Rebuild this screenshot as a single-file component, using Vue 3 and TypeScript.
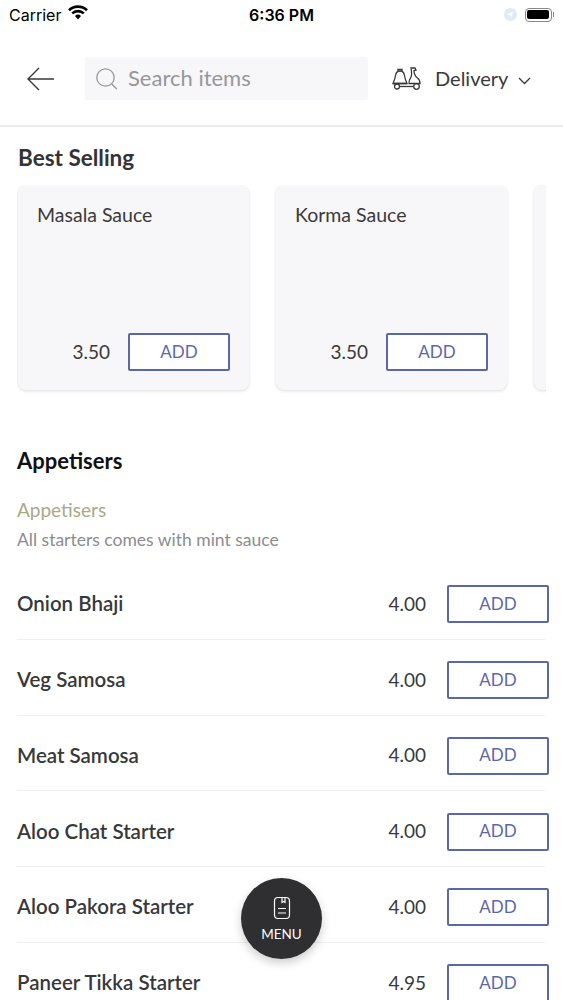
<script setup lang="ts">
const best = [
  { name: 'Masala Sauce', price: '3.50' },
  { name: 'Korma Sauce', price: '3.50' },
]
const items = [
  { name: 'Onion Bhaji', price: '4.00' },
  { name: 'Veg Samosa', price: '4.00' },
  { name: 'Meat Samosa', price: '4.00' },
  { name: 'Aloo Chat Starter', price: '4.00' },
  { name: 'Aloo Pakora Starter', price: '4.00' },
  { name: 'Paneer Tikka Starter', price: '4.95' },
]
</script>

<template>
  <div class="page">
    <div class="status">
      <div class="status-left">
        <span>Carrier</span>
        <svg class="wifi" width="20" height="15" viewBox="0 0 20 15">
          <path d="M1 5.2a13 13 0 0 1 18 0" fill="none" stroke="#000" stroke-width="2.6" />
          <path d="M4.2 8.4a8.5 8.5 0 0 1 11.6 0" fill="none" stroke="#000" stroke-width="2.6" />
          <path d="M7 11a4.4 4.4 0 0 1 6 0l-3 3.500z" fill="#000" />
        </svg>
      </div>
      <div class="status-time">6:36 PM</div>
      <div class="status-right">
        <svg width="13" height="13" viewBox="0 0 13 13">
          <circle cx="6.5" cy="6.5" r="6.5" fill="#dfe9f8" />
          <path d="M3 6.6 9.6 3.4 7 10 6.2 7.2z" fill="#fff" />
        </svg>
        <div class="battery"><div class="battery-fill"></div></div>
        <div class="battery-cap"></div>
      </div>
    </div>

    <header class="nav">
      <svg class="back" width="30" height="26" viewBox="0 0 30 26">
        <path d="M28 13H2M13 2 2 13l11 11" fill="none" stroke="#3a3a3c" stroke-width="1.4" />
      </svg>
      <div class="search">
        <svg width="24" height="24" viewBox="0 0 24 24">
          <circle cx="10.5" cy="10.5" r="8.7" fill="none" stroke="#99979c" stroke-width="1.3" />
          <path d="m16.8 17 5 5" fill="none" stroke="#99979c" stroke-width="1.3" />
        </svg>
        <span>Search items</span>
      </div>
      <div class="mode">
        <svg width="30" height="24" viewBox="0 0 30 24" fill="none" stroke="#39393c" stroke-width="1.3">
          <path d="M1 16.5C2 14 3 12 3.500 8.500 4 5.500 6 4 8 4s4 1.500 4.500 4.500c.5 3.500 1.500 5.500 2.500 8z" />
          <path d="M1 16.500h14M6 4V2.500h4V4" />
          <circle cx="5" cy="19.500" r="2.500" />
          <path d="M19 1h4l1 2-2 .5c0 4 1.500 6 3.500 7.500 1.500 1 2.500 3 2.500 5.500H17c-.5-3 1-5 2-6.500 1-1.500.5-6 0-9z" />
          <circle cx="24.500" cy="19.500" r="2.800" />
          <path d="M7.500 19.500H21" />
        </svg>
        <span>Delivery</span>
        <svg class="chev" width="13" height="8" viewBox="0 0 13 8">
          <path d="m1 1 5.500 5.500L12 1" fill="none" stroke="#3a3a3c" stroke-width="1.300" />
        </svg>
      </div>
    </header>

    <main class="content">
      <h2 class="best-title">Best Selling</h2>
      <div class="carousel">
        <article v-for="b in best" :key="b.name" class="card">
          <div class="card-name">{{ b.name }}</div>
          <div class="card-foot">
            <span class="price">{{ b.price }}</span>
            <button class="add">ADD</button>
          </div>
        </article>
        <article class="card card-peek"></article>
      </div>

      <h2 class="section-title">Appetisers</h2>
      <div class="sub-title">Appetisers</div>
      <div class="sub-note">All starters comes with mint sauce</div>

      <div class="list">
        <div v-for="i in items" :key="i.name" class="row">
          <span class="row-name">{{ i.name }}</span>
          <span class="price">{{ i.price }}</span>
          <button class="add">ADD</button>
        </div>
      </div>
    </main>

    <button class="fab">
      <svg width="18" height="24" viewBox="0 0 18 24" fill="none" stroke="#fff" stroke-width="1.200">
        <rect x="1.500" y="1.500" width="15" height="21" rx="3.500" />
        <path d="M9 1.500v5l1.500-1 1.500 1v-5M5 12.500h8M5 17h8" />
      </svg>
      <span>MENU</span>
    </button>
  </div>
</template>

<style scoped>
.page {
  position: relative;
  width: 563px;
  height: 1000px;
  overflow: hidden;
  background: #fff;
  color: #333335;
  font-family: Lato, "Open Sans", sans-serif;
}
.status {
  height: 29px;
  display: grid;
  grid-template-columns: 1fr auto 1fr;
  align-items: center;
  padding: 0 9px;
  font-family: Inter, "Liberation Sans", sans-serif;
  font-size: 16px;
  color: #000;
}
.status-left {
  display: flex;
  align-items: center;
  gap: 7px;
}
.wifi {
  margin-top: -4px;
}
.status-time {
  font-weight: 600;
}
.status-right {
  display: flex;
  justify-content: flex-end;
  align-items: center;
}
.battery {
  width: 27px;
  height: 14px;
  margin-left: 8px;
  border: 1px solid #888;
  border-radius: 4px;
  padding: 1.500px;
  box-sizing: border-box;
}
.battery-fill {
  height: 100%;
  background: #000;
  border-radius: 2px;
}
.battery-cap {
  width: 1.500px;
  height: 5px;
  margin-left: 1px;
  background: #888;
}
.nav {
  height: 92px;
  padding: 4px 31px 0 26px;
  display: flex;
  align-items: center;
  border-bottom: 2px solid #ececee;
  box-sizing: content-box;
}
.back {
  flex: none;
  margin-right: 29px;
  margin-top: -1px;
}
.search {
  flex: none;
  width: 283px;
  height: 43px;
  margin-top: -1px;
  display: flex;
  align-items: center;
  gap: 9px;
  padding-left: 10px;
  box-sizing: border-box;
  background: #f7f6f8;
  border-radius: 3px;
  color: #98969b;
  font-size: 22px;
}
.search span {
  margin-top: -2px;
}
.mode {
  flex: none;
  display: flex;
  align-items: center;
  margin-left: 24px;
  font-size: 20px;
  color: #3a3a3c;
}
.mode span {
  margin-left: 13px;
  margin-top: -2px;
}
.chev {
  margin-left: 10px;
  margin-top: 3px;
}
.content {
  padding: 17px 0 0 17px;
}
.best-title {
  margin: 0 0 0 1px;
  font-size: 22.5px;
  line-height: 27px;
  font-weight: 700;
}
.carousel {
  display: flex;
  gap: 27px;
  width: 529px;
  margin-top: 14px;
  padding-bottom: 4px;
  overflow: hidden;
}
.card {
  flex: none;
  width: 231px;
  height: 205px;
  box-sizing: border-box;
  margin-left: 1px;
  padding: 19px 19px 19px 19px;
  display: flex;
  flex-direction: column;
  justify-content: space-between;
  background: #f7f6f8;
  border-radius: 8px;
  box-shadow: 0 1px 3px rgba(0, 0, 0, 0.14);
}
.card + .card {
  margin-left: 0;
}
.card-name {
  font-size: 19.5px;
  line-height: 22px;
  color: #3a3a3c;
}
.card-foot {
  display: flex;
  justify-content: flex-end;
  align-items: center;
  gap: 18px;
}
.card-foot .price {
  margin-top: -2px;
}
.price {
  font-size: 19px;
  color: #3a3a3c;
}
.add {
  flex: none;
  width: 102px;
  height: 38px;
  padding: 0 0 2px;
  background: #fff;
  border: 2.500px solid #5b68a8;
  border-radius: 2px;
  color: #5b68a8;
  font: 400 17px Lato, "Open Sans", sans-serif;
}
.section-title {
  margin: 53px 0 0;
  font-size: 22px;
  line-height: 27px;
  font-weight: 700;
  color: #111113;
}
.sub-title {
  margin-top: 24px;
  font-size: 19px;
  line-height: 23px;
  color: #a9a988;
}
.sub-note {
  margin-top: 8px;
  font-size: 17.500px;
  line-height: 22px;
  color: #8c8c8f;
}
.list {
  margin-top: 13px;
}
.row {
  width: 528px;
  height: 68.75px;
  padding-top: 6px;
  display: flex;
  align-items: center;
  border-bottom: 1px solid #f0f0f1;
  box-sizing: content-box;
}
.row-name {
  flex: 1;
  margin-top: -2px;
  font-size: 20.500px;
  font-weight: 600;
  color: #38383a;
}
.row .price {
  margin-top: -2px;
  margin-right: 21px;
}
.row .add {
  margin-right: -4px;
}
.fab {
  position: absolute;
  left: 241px;
  top: 878px;
  width: 81px;
  height: 81px;
  padding: 0;
  border: 0;
  border-radius: 50%;
  background: #2f2e30;
  color: #fff;
  display: flex;
  flex-direction: column;
  align-items: center;
  justify-content: center;
  gap: 6px;
  box-shadow: 0 4px 10px rgba(0, 0, 0, 0.2);
  font: 400 13.500px Lato, "Open Sans", sans-serif;
}
</style>
